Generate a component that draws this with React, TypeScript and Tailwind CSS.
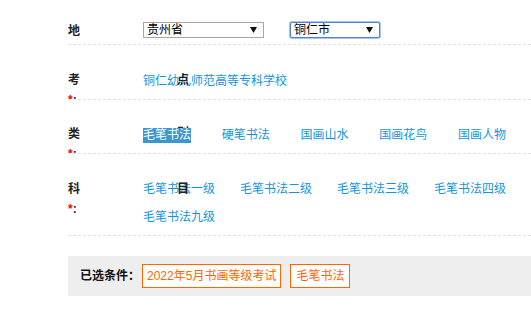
import React from 'react'

const FONT = { fontFamily: '"Liberation Sans", "Noto Sans CJK SC", sans-serif' }

const TYPES = ['毛笔书法', '硬笔书法', '国画山水', '国画花鸟', '国画人物']
const SUBJECTS = ['毛笔书法一级', '毛笔书法二级', '毛笔书法三级', '毛笔书法四级', '毛笔书法九级']

const Arrow: React.FC = () => (
  <svg width="7" height="6" viewBox="0 0 7 6" className="shrink-0">
    <path d="M0 0 H7 L3.5 6 Z" fill="#111" />
  </svg>
)

const FakeSelect: React.FC<{ value: string; width: string; focused?: boolean }> = ({ value, width, focused }) => (
  <div
    className={`relative z-10 flex h-[16px] items-center justify-between bg-white pl-[3px] pr-[6px] text-[12px] leading-[14px] text-black ${width} ${
      focused ? 'rounded-[2px] border border-[#4d82d6] shadow-[0_0_0_1px_#a9c4ee]' : 'border border-[#a6a6a6]'
    }`}
  >
    <span>{value}</span>
    <Arrow />
  </div>
)

// narrow label column: first char, then a wrapped second line that gets cut at the row border
const Label: React.FC<{ first: string; required?: boolean; second?: string; cls: string }> = ({ first, required, second, cls }) => (
  <div className={`w-[12px] shrink-0 overflow-hidden text-[12px] font-bold leading-[20px] text-[#222] ${cls}`}>
    <div>{first}</div>
    {required ? (
      <div className="whitespace-nowrap">
        <span className="text-[#f00]">*</span>:
      </div>
    ) : (
      <div>{second}</div>
    )}
  </div>
)

const Stray: React.FC<{ ch: string; top: string }> = ({ ch, top }) => (
  <span className={`absolute left-[109px] z-0 text-[12px] font-bold leading-[20px] text-[#222] ${top}`}>{ch}</span>
)

export default function App() {
  return (
    <div className="h-[309px] w-[531px] overflow-hidden bg-white pl-[68px]" style={FONT}>
      {/* 地区 */}
      <div className="relative flex border-b border-dashed border-[#e2e2e2]">
        <Label first="地" second="区" cls="mt-[21px] h-[23px]" />
        <Stray ch="区" top="top-[21px]" />
        <div className="ml-[63px] flex gap-[26px] pt-[22px] pb-[6px]">
          <FakeSelect value="贵州省" width="w-[121px]" />
          <FakeSelect value="铜仁市" width="w-[90px]" focused />
        </div>
      </div>

      {/* 考点 */}
      <div className="relative flex border-b border-dashed border-[#e2e2e2]">
        <Label first="考" required cls="mt-[25px] h-[29px]" />
        <div className="ml-[63px] pt-[29px] pb-[10px]">
          <a className="block h-[15px] text-[12px] leading-[15px] text-[#1296db]">铜仁幼儿师范高等专科学校</a>
        </div>
        <Stray ch="点" top="top-[25px]" />
      </div>

      {/* 类别 */}
      <div className="relative flex border-b border-dashed border-[#e2e2e2]">
        <Label first="类" required cls="mt-[24px] h-[29px]" />
        <Stray ch="别" top="top-[23px]" />
        <div className="ml-[63px] flex flex-wrap gap-x-[30.75px] pt-[28px] pb-[10px]">
          {TYPES.map((t, i) => (
            <a
              key={t}
              className={`relative z-10 block h-[15px] text-[12px] leading-[15px] ${
                i === 0 ? 'bg-[#3a97cf] text-white' : 'text-[#1296db]'
              }`}
            >
              {t}
            </a>
          ))}
        </div>
      </div>

      {/* 科目 */}
      <div className="relative flex border-b border-dashed border-[#e2e2e2]">
        <Label first="科" required cls="mt-[25px] h-[56px]" />
        <div className="ml-[63px] flex w-[388px] flex-wrap gap-x-[25px] gap-y-[13px] pt-[28px] pb-[10px]">
          {SUBJECTS.map((s) => (
            <a key={s} className="block h-[15px] text-[12px] leading-[15px] text-[#1296db]">
              {s}
            </a>
          ))}
        </div>
        <Stray ch="目" top="top-[25px]" />
      </div>

      {/* 已选条件 */}
      <div className="mt-[20px] flex h-[40px] items-center bg-[#eeeeee] pl-[12px]">
        <span className="mr-[2px] text-[12px] font-bold text-[#111]">已选条件：</span>
        <span className="flex h-[24px] items-center border border-[#ff6600] bg-white px-[4px] text-[12px] text-[#ff6600]">
          2022年5月书画等级考试
        </span>
        <span className="ml-[9px] flex h-[24px] items-center border border-[#ff6600] bg-white px-[5px] text-[12px] text-[#ff6600]">
          毛笔书法
        </span>
      </div>
    </div>
  )
}
